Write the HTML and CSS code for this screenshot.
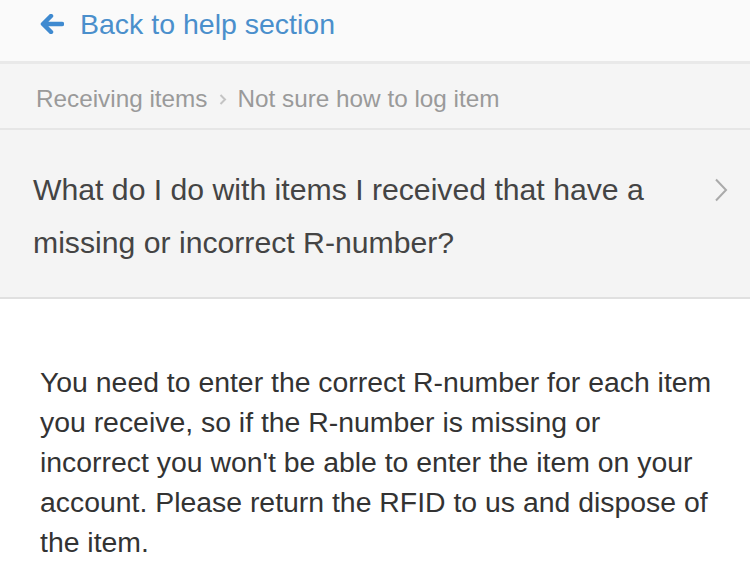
FILE: index.html
```html
<!DOCTYPE html>
<html lang="en">
<head>
  <meta charset="UTF-8" />
  <title>Help - Receiving items</title>
  <link rel="stylesheet" href="styles.css">
</head>
<body>

  <!-- Link de volta -->
  <header class="topo">
    <a class="voltar" href="#">
      <svg class="seta" width="24" height="20" viewBox="0 0 24 20">
        <path d="M11 2 L3 10 L11 18 M3.5 10 H22" fill="none" stroke="#3f8ad0" stroke-width="4.5" stroke-linecap="round" stroke-linejoin="round"/>
      </svg>
      Back to help section
    </a>
  </header>

  <nav class="trilha">
    <span>Receiving items</span>
    <svg class="sep" width="8" height="11" viewBox="0 0 8 11">
      <path d="M1.5 1 L6 5.5 L1.5 10" fill="none" stroke="#c4c4c4" stroke-width="2"/>
    </svg>
    <span>Not sure how to log item</span>
  </nav>

  <section class="pergunta">
    <h2>What do I do with items I received that have a missing or incorrect R-number?</h2>
    <svg class="chevron" width="14" height="24" viewBox="0 0 14 24">
      <path d="M2 1.5 L12 12 L2 22.5" fill="none" stroke="#aaaaaa" stroke-width="2"/>
    </svg>
  </section>

  <main class="resposta">
    <p>You need to enter the correct R-number for each item you receive, so if the R-number is missing or incorrect you won't be able to enter the item on your account. Please return the RFID to us and dispose of the item.</p>
  </main>

</body>
</html>
```

FILE: styles.css
```css
body {
  margin: 0;
  font-family: "Liberation Sans", Arial, sans-serif;
  background: #fff;
  color: #333;
}

.topo {
  background: #fafafa;
  height: 61px;
  border-bottom: 3px solid #e9e9e9;
  display: flex;
  align-items: center;
  padding-left: 40px;
}

.voltar {
  display: flex;
  align-items: center;
  gap: 16px;
  color: #4a8fcc;
  font-size: 28.5px;
  text-decoration: none;
  margin-top: -13px;
}

.trilha {
  background: #f5f5f5;
  height: 66px;
  border-bottom: 2px solid #e6e6e6;
  display: flex;
  align-items: center;
  gap: 11px;
  padding-left: 36px;
  font-size: 24.3px;
  color: #9a9a9a;
  padding-top: 6px;
  box-sizing: border-box;
}

.pergunta {
  background: #f4f4f4;
  border-bottom: 2px solid #e0e0e0;
  display: flex;
  align-items: center;
  justify-content: space-between;
  padding: 33px 22px 28px 33px;
}

.pergunta h2 {
  margin: 0;
  font-weight: normal;
  font-size: 30.2px;
  line-height: 53px;
  color: #444;
  max-width: 640px;
}

.chevron {
  margin-top: -53px;
}

.resposta {
  padding: 63px 36px 0 40px;
}

.resposta p {
  margin: 0;
  font-size: 28.4px;
  line-height: 40px;
  color: #333;
}
```
